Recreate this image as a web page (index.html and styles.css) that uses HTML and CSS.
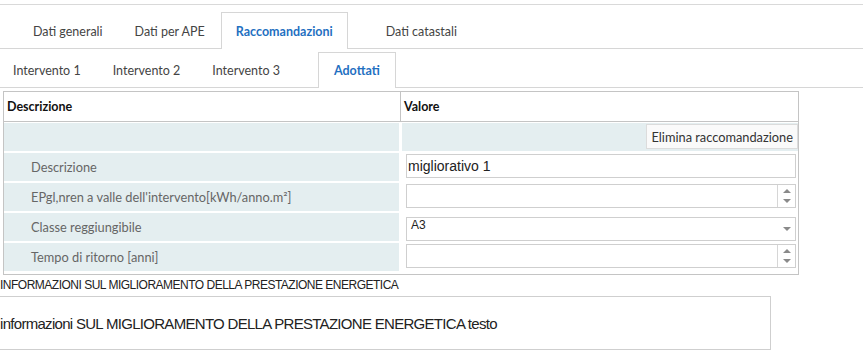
FILE: index.html
```html
<!DOCTYPE html>
<html lang="it">
<head>
    <meta charset="UTF-8">
    <title>Raccomandazioni</title>
    <link rel="stylesheet" href="styles.css">
</head>
<body>

<div class="page">
    <!-- Schede principali -->
    <ul class="tabs main-tabs">
        <li class="tab">Dati generali</li>
        <li class="tab">Dati per APE</li>
        <li class="tab active">Raccomandazioni</li>
        <li class="tab wide">Dati catastali</li>
    </ul>

    <!-- Schede interventi -->
    <ul class="tabs sub-tabs">
        <li class="tab">Intervento 1</li>
        <li class="tab">Intervento 2</li>
        <li class="tab">Intervento 3</li>
        <li class="tab active">Adottati</li>
    </ul>

    <div class="grid">
        <div class="grid-head">
            <div class="hcell first">Descrizione</div>
            <div class="hcell">Valore</div>
        </div>
        <div class="grid-body">
            <div class="label"></div>
            <div class="value shaded">
                <button class="btn">Elimina raccomandazione</button>
            </div>

            <div class="label">Descrizione</div>
            <div class="value">
                <div class="field">migliorativo 1</div>
            </div>

            <div class="label">EPgl,nren a valle dell'intervento[kWh/anno.m²]</div>
            <div class="value">
                <div class="field spin">
                    <span class="spin-btns"><i class="up"></i><i class="down"></i></span>
                </div>
            </div>

            <div class="label">Classe reggiungibile</div>
            <div class="value">
                <div class="field select">A3<span class="arrow"><i class="down"></i></span></div>
            </div>

            <div class="label">Tempo di ritorno [anni]</div>
            <div class="value">
                <div class="field spin">
                    <span class="spin-btns"><i class="up"></i><i class="down"></i></span>
                </div>
            </div>
        </div>
    </div>

    <div class="info-title">INFORMAZIONI SUL MIGLIORAMENTO DELLA PRESTAZIONE ENERGETICA</div>
    <div class="info-box">informazioni SUL MIGLIORAMENTO DELLA PRESTAZIONE ENERGETICA testo</div>
</div>

</body>
</html>
```

FILE: styles.css
```css
/* Stile globale */
body {
    margin: 0;
    font-family: Lato, "Open Sans", sans-serif;
    font-size: 12.5px;
    color: #333;
    background: #fff;
}

.page {
    border-top: 1px solid #d9d9d9;
    margin-top: 4px;
}

/* Schede */
.tabs {
    list-style: none;
    margin: 0;
    padding: 0;
    display: flex;
    border-bottom: 1px solid #d6d6d6;
}

.tab {
    padding: 0 15px;
    border: 1px solid transparent;
    border-bottom: none;
    color: #444;
    display: flex;
    align-items: center;
    margin-bottom: -1px;
}

.tab.active {
    border-color: #d6d6d6;
    background: #fff;
    color: #1f70c1;
    font-weight: bold;
}

.main-tabs {
    margin-top: 7px;
    height: 36px;
    padding-left: 17px;
}

.main-tabs .tab.active {
    padding: 0 14px;
}

.main-tabs .tab.wide {
    padding: 0 24px 0 37px;
}

.sub-tabs {
    margin-top: 3px;
    height: 35px;
}

.sub-tabs .tab {
    padding: 0 18px 0 12px;
}

.sub-tabs .tab.active {
    margin-left: 19px;
    padding: 0 15px;
}

/* Griglia */
.grid {
    margin: 3px 0 0 3px;
    width: 794px;
    border: 1px solid #c4c4c4;
}

.grid-head {
    display: grid;
    grid-template-columns: 397px 1fr;
    border-bottom: 1px solid #c4c4c4;
    height: 29px;
}

.hcell {
    font-weight: bold;
    color: #111;
    display: flex;
    align-items: center;
    padding-left: 3px;
}

.hcell.first {
    border-right: 1px solid #c4c4c4;
}

.grid-body {
    display: grid;
    grid-template-columns: 395px 1fr;
    grid-auto-rows: 28px;
    gap: 2px 3px;
    padding: 1px 0 3px 0;
}

.label {
    background: #e4eef0;
    color: #666;
    font-size: 12.8px;
    display: flex;
    align-items: center;
    padding-left: 27px;
}

.value {
    display: flex;
    align-items: flex-start;
    padding: 1px 2px 0 4px;
}

.value.shaded {
    background: #e4eef0;
    justify-content: flex-end;
    padding: 1px 0 0 0;
}

.btn {
    font-family: Lato, "Open Sans", sans-serif;
    font-size: 12.8px;
    color: #333;
    background: #fafafa;
    border: 1px solid #dcdcdc;
    height: 25px;
    padding: 0 4px;
}

.field {
    flex: 1;
    height: 22px;
    border: 1px solid #cfcfcf;
    background: #fff;
    font-family: "Liberation Sans", Arial, sans-serif;
    font-size: 14px;
    color: #222;
    display: flex;
    align-items: center;
    padding-left: 1px;
    position: relative;
}

.field.select {
    font-size: 12px;
    align-items: flex-start;
    padding-left: 4px;
    margin-top: 3px;
}

.spin-btns,
.arrow {
    position: absolute;
    right: 0;
    top: 0;
    bottom: 0;
    width: 17px;
    display: flex;
    flex-direction: column;
    align-items: center;
    justify-content: center;
    gap: 6px;
}

.spin-btns {
    border-left: 1px solid #d6d6d6;
}

.up,
.down {
    width: 0;
    height: 0;
    border-left: 4px solid transparent;
    border-right: 4px solid transparent;
}

.up {
    border-bottom: 4px solid #8a8a8a;
}

.down {
    border-top: 4px solid #8a8a8a;
}

/* Informazioni */
.info-title {
    margin-top: 3px;
    font-family: "Liberation Sans", Arial, sans-serif;
    font-size: 12px;
    letter-spacing: -0.5px;
    color: #222;
}

.info-box {
    margin: 4px 0 0 -1px;
    width: 770px;
    height: 52px;
    border: 1px solid #cfcfcf;
    font-family: "Liberation Sans", Arial, sans-serif;
    font-size: 15px;
    letter-spacing: -0.7px;
    color: #222;
    display: flex;
    align-items: center;
}
```
